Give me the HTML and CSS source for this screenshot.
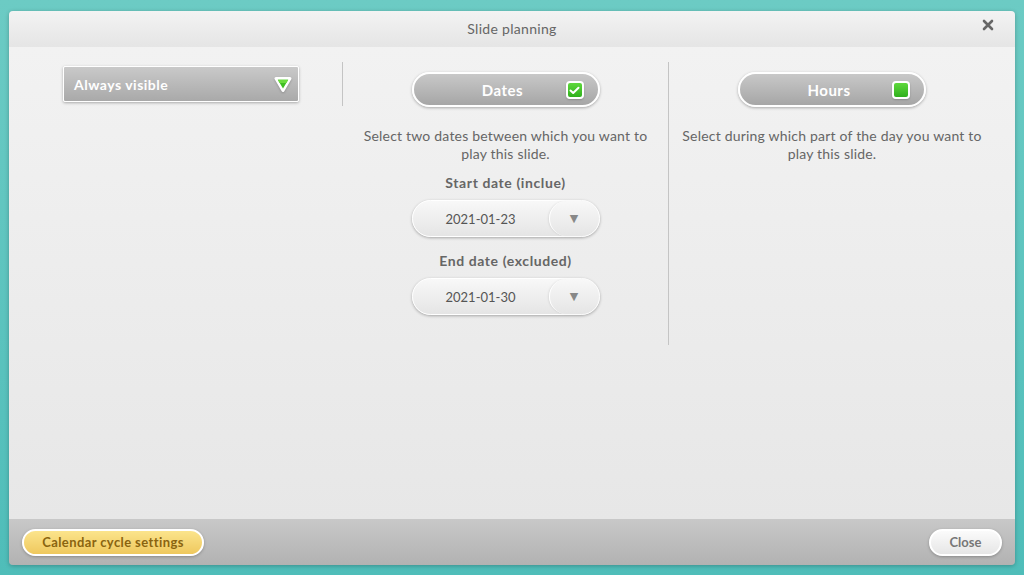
FILE: index.html
```html
<!DOCTYPE html>
<html lang="en">
<head>
    <meta charset="UTF-8">
    <title>Slide planning</title>
    <link rel="stylesheet" href="styles.css">
</head>
<body>
    <div class="dialog">
        <div class="dialog-header">
            <span class="dialog-title">Slide planning</span>
            <button class="close-x">
                <svg width="12" height="12" viewBox="0 0 12 12"><path d="M2 2 L10 10 M10 2 L2 10" stroke="#666" stroke-width="2.6" stroke-linecap="round"/></svg>
            </button>
        </div>

        <div class="dialog-body">
            <div class="col col-mode">
                <div class="select-box">
                    <span>Always visible</span>
                    <svg class="select-arrow" width="20" height="19" viewBox="0 0 20 19">
                        <path d="M3 3.5 L17 3.5 L10 15.5 Z" fill="#fff" stroke="#fff" stroke-width="3" stroke-linejoin="round"/>
                        <path d="M4.8 4.8 L15.2 4.8 L10 13.6 Z" fill="#3fbf22"/>
                        <path d="M4.8 4.8 L15.2 4.8 L13.4 7.9 L6.6 7.9 Z" fill="#6bdc3e"/>
                    </svg>
                </div>
            </div>

            <div class="col col-dates">
                <div class="toggle">
                    <span class="toggle-label">Dates</span>
                    <span class="check">
                        <svg width="11" height="9" viewBox="0 0 11 9"><path d="M1.5 4.5 L4.2 7 L9.5 1.8" fill="none" stroke="#fff" stroke-width="2" stroke-linecap="round" stroke-linejoin="round"/></svg>
                    </span>
                </div>
                <p class="hint">Select two dates between which you want to play this slide.</p>

                <div class="field-label">Start date (inclue)</div>
                <div class="date-pill">
                    <span class="date-value">2021-01-23</span>
                    <span class="date-btn">&#9660;</span>
                </div>

                <div class="field-label">End date (excluded)</div>
                <div class="date-pill">
                    <span class="date-value">2021-01-30</span>
                    <span class="date-btn">&#9660;</span>
                </div>
            </div>

            <div class="col col-hours">
                <div class="toggle">
                    <span class="toggle-label">Hours</span>
                    <span class="check"></span>
                </div>
                <p class="hint">Select during which part of the day you want to play this slide.</p>
            </div>
        </div>

        <div class="dialog-footer">
            <button class="btn btn-yellow">Calendar cycle settings</button>
            <button class="btn btn-white">Close</button>
        </div>
    </div>
</body>
</html>
```

FILE: styles.css
```css
body {
    margin: 0;
    height: 575px;
    font-family: 'Lato', 'Open Sans', sans-serif;
    background: linear-gradient(to bottom, #6ccbc4, #4fbdb9);
    overflow: hidden;
}

.dialog {
    margin: 11px 0 0 9px;
    width: 1006px;
    height: 554px;
    display: flex;
    flex-direction: column;
    border-radius: 4px;
    overflow: hidden;
    box-shadow: 0 1px 4px rgba(0, 0, 0, 0.25);
}

/* header */
.dialog-header {
    height: 36px;
    flex-shrink: 0;
    display: flex;
    align-items: center;
    justify-content: center;
    position: relative;
    background: linear-gradient(to bottom, #f3f3f3, #e5e5e5);
}

.dialog-title {
    font-size: 14px;
    letter-spacing: 0.3px;
    color: #666;
    margin-top: -1px;
}

.close-x {
    position: absolute;
    right: 20px;
    top: 7px;
    width: 14px;
    height: 14px;
    border: none;
    background: none;
    padding: 0;
    display: flex;
    align-items: center;
    justify-content: center;
    cursor: pointer;
}

/* body */
.dialog-body {
    flex: 1;
    display: grid;
    grid-template-columns: 334px 326px 326px;
    align-items: start;
    padding-top: 15px;
    background: linear-gradient(to bottom, #f2f2f2, #e7e7e7);
}

.col {
    display: flex;
    flex-direction: column;
    align-items: center;
}

.col-mode {
    align-items: flex-start;
    padding: 4px 0 4px 54px;
    border-right: 1px solid #c4c4c4;
}

.col-dates {
    padding: 10px 0 30px;
    border-right: 1px solid #c4c4c4;
}

.col-hours {
    padding-top: 10px;
}

.select-box {
    width: 219px;
    height: 34px;
    display: flex;
    align-items: center;
    justify-content: space-between;
    padding: 0 5px 0 10px;
    border: 1px solid #fff;
    border-radius: 2px;
    background: linear-gradient(to bottom, #c9c9c9, #a9a9a9);
    box-shadow: 0 1px 3px rgba(0, 0, 0, 0.3);
    color: #fff;
    font-size: 14px;
    letter-spacing: 0.5px;
    font-weight: bold;
}

.select-arrow {
    filter: drop-shadow(0 1px 1px rgba(0, 0, 0, 0.2));
}

.toggle {
    width: 184px;
    height: 31px;
    display: flex;
    align-items: center;
    position: relative;
    border: 2px solid #fff;
    border-radius: 18px;
    background: linear-gradient(to bottom, #c8c8c8, #a6a6a6);
    box-shadow: 0 1px 3px rgba(0, 0, 0, 0.3);
}

.toggle-label {
    flex: 1;
    text-align: center;
    color: #fff;
    font-size: 15px;
    letter-spacing: 0.5px;
    font-weight: bold;
    padding-right: 6px;
}

.check {
    position: absolute;
    right: 14px;
    top: 7px;
    width: 14px;
    height: 14px;
    border: 2px solid #fff;
    border-radius: 4px;
    background: linear-gradient(to bottom, #5fd83c, #2fb01c);
    box-shadow: 0 1px 2px rgba(0, 0, 0, 0.2);
    display: flex;
    align-items: center;
    justify-content: center;
}

.hint {
    margin: 20px 0 0;
    width: 300px;
    text-align: center;
    font-size: 14px;
    letter-spacing: 0.2px;
    line-height: 18px;
    color: #666;
}

.field-label {
    margin-top: 11px;
    font-size: 14px;
    letter-spacing: 0.6px;
    line-height: 18px;
    font-weight: bold;
    color: #666;
}

.field-label + .date-pill {
    margin-top: 8px;
}

.date-pill + .field-label {
    margin-top: 15px;
}

.date-pill {
    width: 186px;
    height: 35px;
    display: flex;
    align-items: center;
    border: 1px solid #fff;
    border-radius: 19px;
    background: linear-gradient(to bottom, #f8f8f8, #e5e5e5);
    box-shadow: 0 1px 3px rgba(0, 0, 0, 0.3);
}

.date-value {
    flex: 1;
    text-align: center;
    font-size: 13px;
    color: #555;
}

.date-btn {
    width: 50px;
    height: 35px;
    display: flex;
    align-items: center;
    justify-content: center;
    box-sizing: border-box;
    border-left: 1.5px solid #fff;
    border-radius: 18px;
    box-shadow: -1px 0 2px rgba(0, 0, 0, 0.08);
    color: #888;
    font-size: 11px;
    font-family: 'DejaVu Sans', sans-serif;
}

/* footer */
.dialog-footer {
    height: 46px;
    flex-shrink: 0;
    display: flex;
    align-items: center;
    justify-content: space-between;
    padding: 0 13px;
    background: linear-gradient(to bottom, #c8c8c8, #b2b2b2);
}

.btn {
    height: 27px;
    border: 2px solid #fff;
    border-radius: 14px;
    font-family: inherit;
    font-size: 13px;
    cursor: pointer;
    box-shadow: 0 1px 3px rgba(0, 0, 0, 0.25);
}

.btn-yellow {
    width: 182px;
    background: linear-gradient(to bottom, #fbe48c, #efc85e);
    color: #8a6410;
    font-weight: bold;
    letter-spacing: 0.4px;
}

.btn-white {
    width: 73px;
    background: linear-gradient(to bottom, #fbfbfb, #e6e6e6);
    color: #777;
    font-weight: bold;
}
```
